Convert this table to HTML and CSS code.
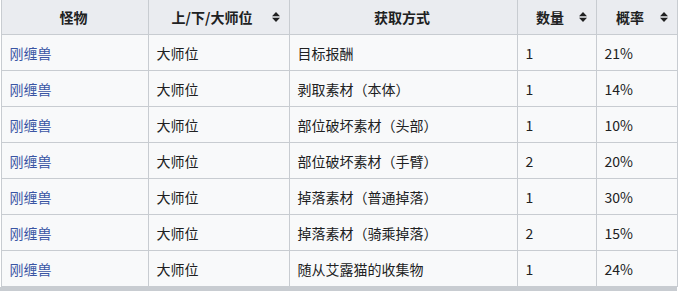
FILE: index.html
```html
<!DOCTYPE html>
<html>
<head>
  <title>刚缠兽 掉落</title>
  <link rel="stylesheet" href="styles.css">
</head>
<body>
  <div class="wrap">
    <table class="drops">
      <colgroup>
        <col class="c-monster">
        <col class="c-rank">
        <col class="c-method">
        <col class="c-qty">
        <col class="c-rate">
      </colgroup>
      <thead>
        <tr>
          <th>怪物</th>
          <th class="sortable">上/下/大师位<svg class="sort" width="8" height="10" viewBox="0 0 8 10"><path d="M0 4.2L4 0L8 4.2Z M0 5.8L4 10L8 5.8Z" fill="#202122"/></svg></th>
          <th>获取方式</th>
          <th class="sortable">数量<svg class="sort" width="8" height="10" viewBox="0 0 8 10"><path d="M0 4.2L4 0L8 4.2Z M0 5.8L4 10L8 5.8Z" fill="#202122"/></svg></th>
          <th class="sortable">概率<svg class="sort" width="8" height="10" viewBox="0 0 8 10"><path d="M0 4.2L4 0L8 4.2Z M0 5.8L4 10L8 5.8Z" fill="#202122"/></svg></th>
        </tr>
      </thead>
      <tbody>
        <tr><td><a href="#">刚缠兽</a></td><td>大师位</td><td>目标报酬</td><td>1</td><td>21%</td></tr>
        <tr><td><a href="#">刚缠兽</a></td><td>大师位</td><td>剥取素材<span class="p">（</span>本体<span class="p">）</span></td><td>1</td><td>14%</td></tr>
        <tr><td><a href="#">刚缠兽</a></td><td>大师位</td><td>部位破坏素材<span class="p">（</span>头部<span class="p">）</span></td><td>1</td><td>10%</td></tr>
        <tr><td><a href="#">刚缠兽</a></td><td>大师位</td><td>部位破坏素材<span class="p">（</span>手臂<span class="p">）</span></td><td>2</td><td>20%</td></tr>
        <tr><td><a href="#">刚缠兽</a></td><td>大师位</td><td>掉落素材<span class="p">（</span>普通掉落<span class="p">）</span></td><td>1</td><td>30%</td></tr>
        <tr><td><a href="#">刚缠兽</a></td><td>大师位</td><td>掉落素材<span class="p">（</span>骑乘掉落<span class="p">）</span></td><td>2</td><td>15%</td></tr>
        <tr><td><a href="#">刚缠兽</a></td><td>大师位</td><td>随从艾露猫的收集物</td><td>1</td><td>24%</td></tr>
      </tbody>
    </table>
    <div class="track"></div>
  </div>
</body>
</html>
```

FILE: styles.css
```css
body {
  margin: 0;
  background-color: #fff;
  font-family: "Noto Sans CJK SC", "Noto Sans", sans-serif;
  font-size: 14px;
  color: #202122;
}
.wrap {
  width: 677px;
}
.drops {
  border-collapse: collapse;
  table-layout: fixed;
  width: 676px;
  margin-left: 0.5px;
  background-color: #f8f9fa;
}
.c-monster { width: 147px; }
.c-rank { width: 141px; }
.c-method { width: 228px; }
.c-qty { width: 79px; }
.c-rate { width: 81px; }
th, td {
  border: 1px solid #c8ccd1;
  padding: 0 10px 0 8px;
  line-height: 20px;
}
th {
  background-color: #eaecf0;
  height: 34px;
  font-weight: bold;
  text-align: center;
}
th.sortable {
  padding-right: 21px;
  position: relative;
}
.sort {
  position: absolute;
  right: 9px;
  top: 12px;
}
td {
  height: 35px;
  text-align: left;
}
thead tr th {
  border-top: none;
}
/* centred full-width brackets, as on the original page */
.p {
  font-family: "Noto Sans CJK TC", "Noto Sans CJK SC", sans-serif;
}
a {
  color: #3a55a4;
  text-decoration: none;
}
.track {
  height: 4px;
  background-color: #c8ccd1;
}
```
